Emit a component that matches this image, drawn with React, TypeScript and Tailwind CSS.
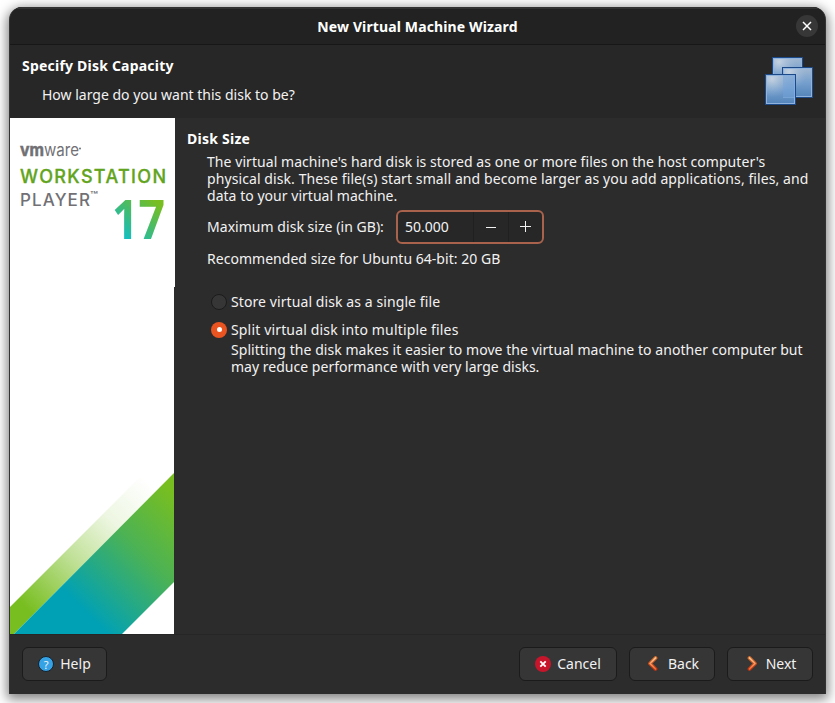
import type { ReactNode } from 'react';

function DisksIcon() {
  return (
    <svg width="48" height="48" viewBox="0 0 48 48" shapeRendering="crispEdges">
      <defs>
        <linearGradient id="pane" x1="0" y1="0" x2="0" y2="1">
          <stop offset="0" stopColor="#a3b9d1" />
          <stop offset="0.5" stopColor="#759fcd" />
          <stop offset="1" stopColor="#5283b9" />
        </linearGradient>
        <radialGradient id="shine" cx="0.2" cy="0.12" r="0.65">
          <stop offset="0" stopColor="#d0dae5" stopOpacity="0.8" />
          <stop offset="1" stopColor="#9db8d6" stopOpacity="0" />
        </radialGradient>
      </defs>
      {[
        [7, 0],
        [17, 10],
        [0, 17],
      ].map(([x, y]) => (
        <g key={x}>
          <rect x={x + 0.5} y={y + 0.5} width="30" height="30" fill="url(#pane)" stroke="#1c4988" />
          <rect x={x + 1.5} y={y + 1.5} width="28" height="28" fill="url(#shine)" stroke="#8fb3dc" />
        </g>
      ))}
      <rect x="18" y="18" width="12" height="22" fill="#73a5de" opacity="0.45" />
      <path d="M18 40h12" fill="none" stroke="#8db7e7" opacity="0.5" />
    </svg>
  );
}

function Brand() {
  return (
    <svg width="165" height="169" viewBox="10 118 165 169" className="block bg-white">
      <defs>
        <linearGradient id="seventeen" gradientUnits="userSpaceOnUse" x1="125" y1="241" x2="158" y2="203">
          <stop offset="0" stopColor="#10bfc8" />
          <stop offset="0.5" stopColor="#43bb70" />
          <stop offset="1" stopColor="#78be20" />
        </linearGradient>
      </defs>
      <g fill="#717074">
        <text x="20" y="156" fontSize="17" fontWeight="700" stroke="#717074" strokeWidth="0.5" textLength="24" lengthAdjust="spacingAndGlyphs" fontFamily="Inter, sans-serif">vm</text>
        <text x="44" y="156" fontSize="17" textLength="35" lengthAdjust="spacingAndGlyphs" fontFamily="Inter, sans-serif">ware</text>
        <circle cx="80" cy="148.500" r="1" />
        <text x="20" y="205.700" fontSize="17" fontWeight="500" textLength="70" lengthAdjust="spacing" fontFamily="Inter, sans-serif">PLAYER</text>
        <text x="90" y="199" fontSize="10" fontWeight="600" textLength="8" lengthAdjust="spacingAndGlyphs" fontFamily="Inter, sans-serif">™</text>
      </g>
      <text x="20" y="182.500" fontSize="18" fontWeight="500" fill="#62a420" stroke="#62a420" strokeWidth="0.3" textLength="146" lengthAdjust="spacing" fontFamily="Inter, sans-serif">WORKSTATION</text>
      <g fontSize="53" fontWeight="700" fill="url(#seventeen)" fontFamily="'Open Sans', sans-serif">
        <text x="112" y="239" textLength="53" lengthAdjust="spacingAndGlyphs">17</text>
      </g>
    </svg>
  );
}

function Stripes() {
  return (
    <svg width="164" height="347" viewBox="10 287 164 347" className="block bg-white">
      <defs>
        <linearGradient id="fade" gradientUnits="userSpaceOnUse" x1="26" y1="608" x2="150" y2="484">
          <stop offset="0" stopColor="#78be20" />
          <stop offset="0.4" stopColor="#78be20" stopOpacity="0.45" />
          <stop offset="0.7" stopColor="#78be20" stopOpacity="0.13" />
          <stop offset="1" stopColor="#78be20" stopOpacity="0" />
        </linearGradient>
        <linearGradient id="band" gradientUnits="userSpaceOnUse" x1="80" y1="607" x2="184" y2="503">
          <stop offset="0" stopColor="#00a1b5" />
          <stop offset="0.55" stopColor="#4bb255" />
          <stop offset="1" stopColor="#78be20" />
        </linearGradient>
      </defs>
      <path d="M10 634V607L174 443V473L14 634Z" fill="url(#fade)" />
      <path d="M14 634L174 473V582L122 634Z" fill="url(#band)" />
    </svg>
  );
}

function Button({ width, icon, children }: { width: string; icon: ReactNode; children: ReactNode }) {
  return (
    <button className={`flex h-[34px] items-center justify-center rounded-md border border-[#1b1b1b] bg-[#363636] ${width}`}>
      {icon}
      <span className="pb-0.5">{children}</span>
    </button>
  );
}

function Chevron({ flip }: { flip?: boolean }) {
  return (
    <svg width="16" height="16" viewBox="0 0 16 16" className={flip ? 'mr-[6px] -scale-x-100' : 'mr-[7px]'}>
      <defs>
        <linearGradient id="ember" x1="0" y1="0" x2="0" y2="1">
          <stop offset="0" stopColor="#fcc791" />
          <stop offset="1" stopColor="#ef6a35" />
        </linearGradient>
        <linearGradient id="rim" x1="0" y1="0" x2="0" y2="1">
          <stop offset="0" stopColor="#cf6a2b" />
          <stop offset="1" stopColor="#b8320f" />
        </linearGradient>
      </defs>
      <path d="M10.500 2L5 7.500L10.500 13" fill="none" stroke="url(#rim)" strokeWidth="3.800" strokeLinejoin="round" strokeLinecap="round" />
      <path d="M10.500 2L5 7.500L10.500 13" fill="none" stroke="url(#ember)" strokeWidth="1.700" strokeLinejoin="round" strokeLinecap="round" />
    </svg>
  );
}

export default function App() {
  return (
    <div className="h-[703px] w-[835px] overflow-hidden bg-white pt-[7px] pl-[9px] font-['Noto_Sans',sans-serif] text-[14px] leading-[17px] whitespace-nowrap text-[#f2f2f2]">
      <div className="flex h-[687px] w-[817px] flex-col overflow-hidden rounded-t-[13px] border-x border-[#333333] bg-[#2c2c2c] shadow-[0_3px_12px_2px_rgba(0,0,0,0.5)]">
        <header className="flex h-[38px] shrink-0 items-center border-t-2 border-b border-t-[#333333] border-b-[#171717] bg-[#222222] pr-[7px] pl-[29px]">
          <h1 className="flex-1 text-center font-bold tracking-[0.13px] text-white">New Virtual Machine Wizard</h1>
          <button className="mb-0.5 flex size-[22px] items-center justify-center rounded-full bg-[#373737]">
            <svg width="10" height="10" viewBox="0 0 10 10" stroke="white" strokeWidth="1.500">
              <path d="M1 1L9 9M9 1L1 9" />
            </svg>
          </button>
        </header>
        <section className="flex h-[73px] shrink-0 justify-between bg-[#272727] pt-3 pr-3 pl-3">
          <div>
            <h2 className="font-bold tracking-[0.21px] text-white">Specify Disk Capacity</h2>
            <p className="mt-3 ml-5">How large do you want this disk to be?</p>
          </div>
          <DisksIcon />
        </section>
        <main className="flex h-[516px] shrink-0">
          <aside className="w-[165px] shrink-0">
            <Brand />
            <Stripes />
          </aside>
          <div className="flex-1 pt-3 pl-3">
            <h3 className="font-bold tracking-[0.25px] text-white">Disk Size</h3>
            <div className="mt-[6px] ml-5">
              <p className="tracking-[0.06px]">The virtual machine's hard disk is stored as one or more files on the host computer's</p>
              <p className="tracking-[0.09px]">physical disk. These file(s) start small and become larger as you add applications, files, and</p>
              <p className="tracking-[0.03px]">data to your virtual machine.</p>
              <div className="mt-[6px] flex items-center">
                <label className="w-[189px] pb-0.5 tracking-[0.04px]">Maximum disk size (in GB):</label>
                <div className="flex h-[34px] w-[148px] rounded-md border-2 border-[#a9624b] bg-[#272727]">
                  <span className="flex w-[75px] items-center pb-0.5 pl-[7px]">50.000</span>
                  <button className="flex w-[35px] items-center justify-center border-l border-[#202020]">
                    <span className="h-px w-[10px] bg-[#f2f2f2]" />
                  </button>
                  <button className="flex flex-1 items-center justify-center border-l border-[#202020] pb-px">
                    <svg width="11" height="11" viewBox="0 0 11 11" stroke="#f2f2f2" shapeRendering="crispEdges"><path d="M0 5.500H11M5.500 0V11" /></svg>
                  </button>
                </div>
              </div>
              <p className="mt-[6px] tracking-[0.03px]">Recommended size for Ubuntu 64-bit: 20 GB</p>
              <label className="mt-[26px] flex items-center gap-1 pl-1">
                <span className="size-4 rounded-full border border-[#1b1b1b] bg-[#363636]" />
                <span className="tracking-[0.09px]">Store virtual disk as a single file</span>
              </label>
              <label className="mt-[11px] flex items-center gap-1 pl-1">
                <span className="flex size-4 items-center justify-center rounded-full bg-[#e95420]">
                  <span className="size-[5px] rounded-full bg-white" />
                </span>
                <span className="tracking-[0.16px]">Split virtual disk into multiple files</span>
              </label>
              <p className="mt-[3px] pl-6 tracking-[0.055px]">Splitting the disk makes it easier to move the virtual machine to another computer but</p>
              <p className="pl-6 tracking-[0.02px]">may reduce performance with very large disks.</p>
            </div>
          </div>
        </main>
        <footer className="flex flex-1 gap-3 border-t border-[#262626] px-3 pt-3">
          <Button
            width="w-[85px]"
            icon={
              <span className="mr-[6px] flex size-4 items-center justify-center rounded-full border border-[#16212b] bg-[#35a2e6] text-[11px]">?</span>
            }
          >
            Help
          </Button>
          <div className="flex-1" />
          <Button
            width="w-[98px]"
            icon={
              <svg width="16" height="16" viewBox="0 0 16 16" className="mr-[6px]">
                <circle cx="8" cy="8" r="8" fill="#c7162b" />
                <path d="M5.300 5.300L10.700 10.700M10.700 5.300L5.300 10.700" stroke="white" strokeWidth="1.800" />
              </svg>
            }
          >
            Cancel
          </Button>
          <Button width="w-[86px]" icon={<Chevron />}>Back</Button>
          <Button width="w-[86px]" icon={<Chevron flip />}>Next</Button>
        </footer>
      </div>
    </div>
  );
}
